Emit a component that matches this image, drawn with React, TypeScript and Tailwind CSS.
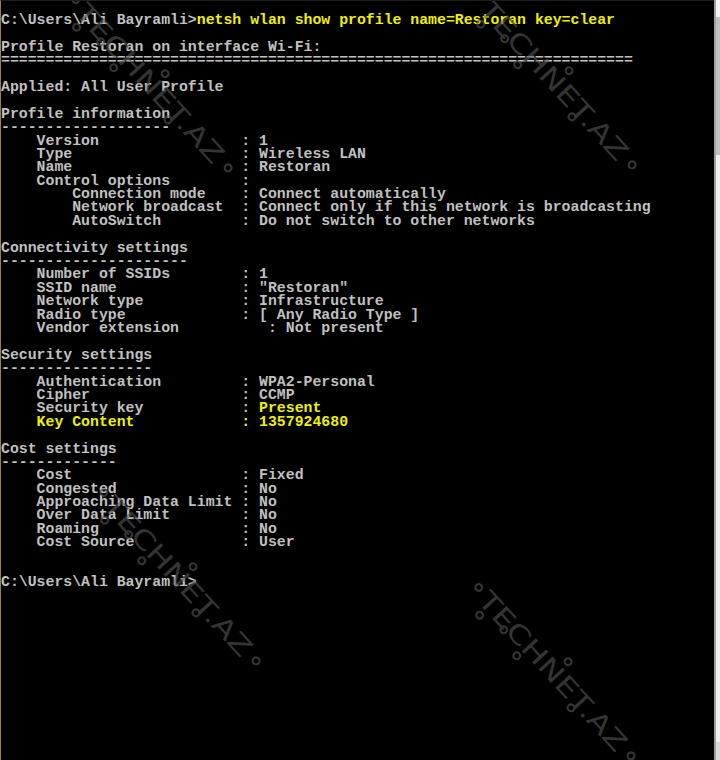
import React from "react";

type Seg = { t: string; y?: boolean };
type Line = Seg[];

const kv = (label: string, value: string, indent = 4, col = 27, opts: { vy?: boolean; all?: boolean } = {}): Line => {
  const left = (" ".repeat(indent) + label).padEnd(col, " ");
  if (opts.all) return [{ t: left + ": " + value, y: true }];
  if (opts.vy) return [{ t: left + ": " }, { t: value, y: true }];
  return [{ t: left + ": " + value }];
};

const plain = (t: string): Line => [{ t }];

const lines: Line[] = [
  [{ t: "C:\\Users\\Ali Bayramli>" }, { t: "netsh wlan show profile name=Restoran key=clear", y: true }],
  plain(""),
  plain("Profile Restoran on interface Wi-Fi:"),
  plain("=".repeat(71)),
  plain(""),
  plain("Applied: All User Profile"),
  plain(""),
  plain("Profile information"),
  plain("-".repeat(19)),
  kv("Version", "1"),
  kv("Type", "Wireless LAN"),
  kv("Name", "Restoran"),
  [{ t: "    Control options".padEnd(27, " ") + ":" }],
  kv("Connection mode", "Connect automatically", 8),
  kv("Network broadcast", "Connect only if this network is broadcasting", 8),
  kv("AutoSwitch", "Do not switch to other networks", 8),
  plain(""),
  plain("Connectivity settings"),
  plain("-".repeat(21)),
  kv("Number of SSIDs", "1"),
  kv("SSID name", '"Restoran"'),
  kv("Network type", "Infrastructure"),
  kv("Radio type", "[ Any Radio Type ]"),
  kv("Vendor extension", "Not present", 4, 30),
  plain(""),
  plain("Security settings"),
  plain("-".repeat(17)),
  kv("Authentication", "WPA2-Personal"),
  kv("Cipher", "CCMP"),
  kv("Security key", "Present", 4, 27, { vy: true }),
  kv("Key Content", "1357924680", 4, 27, { all: true }),
  plain(""),
  plain("Cost settings"),
  plain("-".repeat(13)),
  kv("Cost", "Fixed"),
  kv("Congested", "No"),
  kv("Approaching Data Limit", "No"),
  kv("Over Data Limit", "No"),
  kv("Roaming", "No"),
  kv("Cost Source", "User"),
  plain(""),
  plain(""),
  plain("C:\\Users\\Ali Bayramli>"),
];

const marks: [number, number][] = [
  [72, -3],
  [476, -6],
  [100, 490],
  [475, 585],
];

function Watermark({ x, y }: { x: number; y: number }) {
  const circles: [number, number][] = [
    [3, -1],
    [24, 17],
    [51, 9],
    [79, 17],
    [118, -17],
    [154, 12],
    [230, 0],
  ];
  return (
    <g transform={`translate(${x} ${y}) rotate(47.6)`} opacity={0.6}>
      <text
        x={12}
        y={1}
        dominantBaseline="central"
        fontFamily="'DejaVu Sans', sans-serif"
        fontSize={26}
        fontWeight={400}
        textLength={206}
        lengthAdjust="spacingAndGlyphs"
        fill="#585858"
      >
        TECHNET.AZ
      </text>
      {circles.map(([u, v], i) => (
        <circle key={i} cx={u} cy={v} r={3.4} fill="none" stroke="#585858" strokeWidth={2.2} />
      ))}
    </g>
  );
}

export default function App() {
  return (
    <div className="flex h-[760px] w-[720px] overflow-hidden bg-black">
      <div className="relative flex-1 overflow-hidden border-l border-t border-l-[#a87f32] border-t-[#1e1e1e] bg-black">
        <pre className="m-0 whitespace-pre pt-[13px] font-['Liberation_Mono',monospace] text-[14.83px] font-bold leading-[13.4px] text-[#c0c0c0]">
          {lines.map((ln, i) => (
            <div key={i} className="h-[13.4px]">
              {ln.map((s, j) => (
                <span key={j} className={s.y ? "text-[#f0f000]" : undefined}>
                  {s.t}
                </span>
              ))}
            </div>
          ))}
        </pre>
        <svg className="pointer-events-none absolute left-0 top-0" width={720} height={760}>
          {marks.map(([x, y], i) => (
            <Watermark key={i} x={x} y={y} />
          ))}
        </svg>
      </div>
      <div className="flex w-[6px] flex-col border-l-2 border-l-[#a0a0a0] bg-[#f0f0f0]">
        <div className="h-[17px] bg-[#f4f4f4]" />
        <div className="h-[138px] bg-[#c2c2c2]" />
        <div className="flex-1" />
        <div className="h-[18px] bg-[#dadada]" />
      </div>
    </div>
  );
}
